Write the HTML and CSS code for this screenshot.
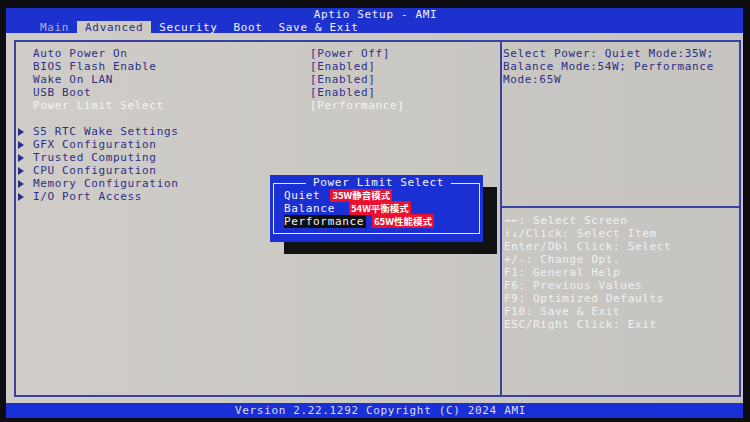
FILE: index.html
```html
<!DOCTYPE html>
<html lang="en">
<head>
    <meta charset="UTF-8">
    <meta name="viewport" content="width=device-width, initial-scale=1.0">
    <title>Aptio Setup - AMI</title>
    <link rel="stylesheet" href="styles.css">
</head>
<body>
    <div class="screen">
        <div class="topbar">
            <div class="title">Aptio Setup - AMI</div>
            <ul class="tabs">
                <li class="tab dim">Main</li>
                <li class="tab active">Advanced</li>
                <li class="tab">Security</li>
                <li class="tab">Boot</li>
                <li class="tab">Save &amp; Exit</li>
            </ul>
        </div>

        <div class="main">
            <div class="frame">
                <div class="settings">
                    <ul class="options">
                        <li class="option"><span>Auto Power On</span><span>[Power Off]</span></li>
                        <li class="option"><span>BIOS Flash Enable</span><span>[Enabled]</span></li>
                        <li class="option"><span>Wake On LAN</span><span>[Enabled]</span></li>
                        <li class="option"><span>USB Boot</span><span>[Enabled]</span></li>
                        <li class="option selected"><span>Power Limit Select</span><span>[Performance]</span></li>
                    </ul>
                    <ul class="submenus">
                        <li class="submenu">S5 RTC Wake Settings</li>
                        <li class="submenu">GFX Configuration</li>
                        <li class="submenu">Trusted Computing</li>
                        <li class="submenu">CPU Configuration</li>
                        <li class="submenu">Memory Configuration</li>
                        <li class="submenu">I/O Port Access</li>
                    </ul>
                </div>

                <div class="sidebar">
                    <div class="help">
                        Select Power: Quiet Mode:35W;<br>
                        Balance Mode:54W; Performance<br>
                        Mode:65W
                    </div>
                    <ul class="keys">
                        <li>→←: Select Screen</li>
                        <li>↑↓/Click: Select Item</li>
                        <li>Enter/Dbl Click: Select</li>
                        <li>+/-: Change Opt.</li>
                        <li>F1: General Help</li>
                        <li>F6: Previous Values</li>
                        <li>F9: Optimized Defaults</li>
                        <li>F10: Save &amp; Exit</li>
                        <li>ESC/Right Click: Exit</li>
                    </ul>
                </div>
            </div>

            <!-- popup opened on Power Limit Select -->
            <div class="popup">
                <div class="popup-box">
                    <span class="popup-title">Power Limit Select</span>
                    <ul class="choices">
                        <li><span class="choice">Quiet</span><span class="tag tag-quiet">35W静音模式</span></li>
                        <li><span class="choice">Balance</span><span class="tag tag-balance">54W平衡模式</span></li>
                        <li><span class="choice current">Performance</span><span class="tag tag-perf">65W性能模式</span></li>
                    </ul>
                </div>
            </div>
        </div>

        <div class="footer">Version 2.22.1292 Copyright (C) 2024 AMI</div>
    </div>
</body>
</html>
```

FILE: styles.css
```css
html, body {
    margin: 0;
    width: 750px;
    height: 422px;
    overflow: hidden;
    background-color: #0d0d12;
}
body {
    font-family: "DejaVu Sans Mono", "Liberation Mono", monospace;
    font-size: 11px;
    letter-spacing: 0.65px;
}
ul {
    list-style: none;
    margin: 0;
    padding: 0;
}
.screen {
    margin: 8px 0 0 6px;
    width: 737px;
    height: 410px;
    display: flex;
    flex-direction: column;
}

/* header */
.topbar {
    height: 25px;
    background-color: #1d31cf;
    color: #f2f2f6;
}
.title {
    height: 13px;
    line-height: 14px;
    text-align: center;
    padding-left: 2px;
}
.tabs {
    display: flex;
    padding-left: 26px;
}
.tab {
    padding: 0 8px;
    height: 13px;
    line-height: 13px;
}
.tab.dim {
    color: #a9b0da;
}
.tab.active {
    background-color: #cdcac5;
    color: #2c3088;
    height: 14px;
}

/* body */
.main {
    position: relative;
    flex: 1;
    padding: 7px 2px 6px 8px;
    background: linear-gradient(90deg, #d0cdc8, #c6c4c0);
    color: #2c2f88;
    line-height: 13px;
}
.frame {
    display: flex;
    height: 100%;
    box-sizing: border-box;
    border: 2px solid #3c40a0;
}
.settings {
    width: 486px;
    box-sizing: border-box;
    border-right: 2px solid #3c40a0;
    padding: 5px 0 0 17px;
}
.option {
    display: grid;
    grid-template-columns: 277px 1fr;
}
.option.selected {
    color: #f4f4f4;
}
.submenus {
    margin-top: 13px;
}
.submenu {
    position: relative;
}
.submenu::before {
    content: "";
    position: absolute;
    left: -15px;
    top: 3px;
    border-left: 6px solid #2c2f88;
    border-top: 4px solid transparent;
    border-bottom: 4px solid transparent;
}
.sidebar {
    flex: 1;
    display: flex;
    flex-direction: column;
}
.help {
    height: 159px;
    padding: 5px 0 0 1px;
    border-bottom: 2px solid #3c40a0;
}
.keys {
    padding: 6px 0 0 2px;
    color: #f0f0f0;
}

/* popup */
.popup {
    position: absolute;
    left: 264px;
    top: 142px;
    width: 207px;
    height: 59px;
    padding: 8px 3px 0 3px;
    background-color: #1b30d2;
    box-shadow: 14px 12px 0 #121214;
}
.popup-box {
    position: relative;
    height: 51px;
    box-sizing: border-box;
    border: 1px solid #e6e8f6;
    padding: 5px 0 0 10px;
    color: #f4f4f8;
}
.popup-title {
    position: absolute;
    top: -8px;
    left: 4px;
    right: 0;
    width: max-content;
    margin: 0 auto;
    padding: 0 7px;
    background-color: #1b30d2;
}
.choices li {
    height: 13px;
}
.choice.current {
    background-color: #101012;
    padding-right: 2px;
}
.tag {
    display: inline-block;
    vertical-align: top;
    margin-top: -1px;
    height: 14px;
    line-height: 14px;
    padding: 0 2px;
    background-color: #ec1030;
    color: #fff;
    font-family: "Noto Sans CJK SC", "Noto Sans", sans-serif;
    font-size: 9.5px;
    font-weight: bold;
    letter-spacing: 0;
}
.tag-quiet {
    margin-left: 10px;
}
.tag-balance {
    margin-left: 14px;
}
.tag-perf {
    margin-left: 6px;
}

/* footer */
.footer {
    height: 15px;
    line-height: 15px;
    background-color: #1a2fd6;
    color: #d9ddf2;
    text-align: center;
    padding-left: 12px;
}
```
